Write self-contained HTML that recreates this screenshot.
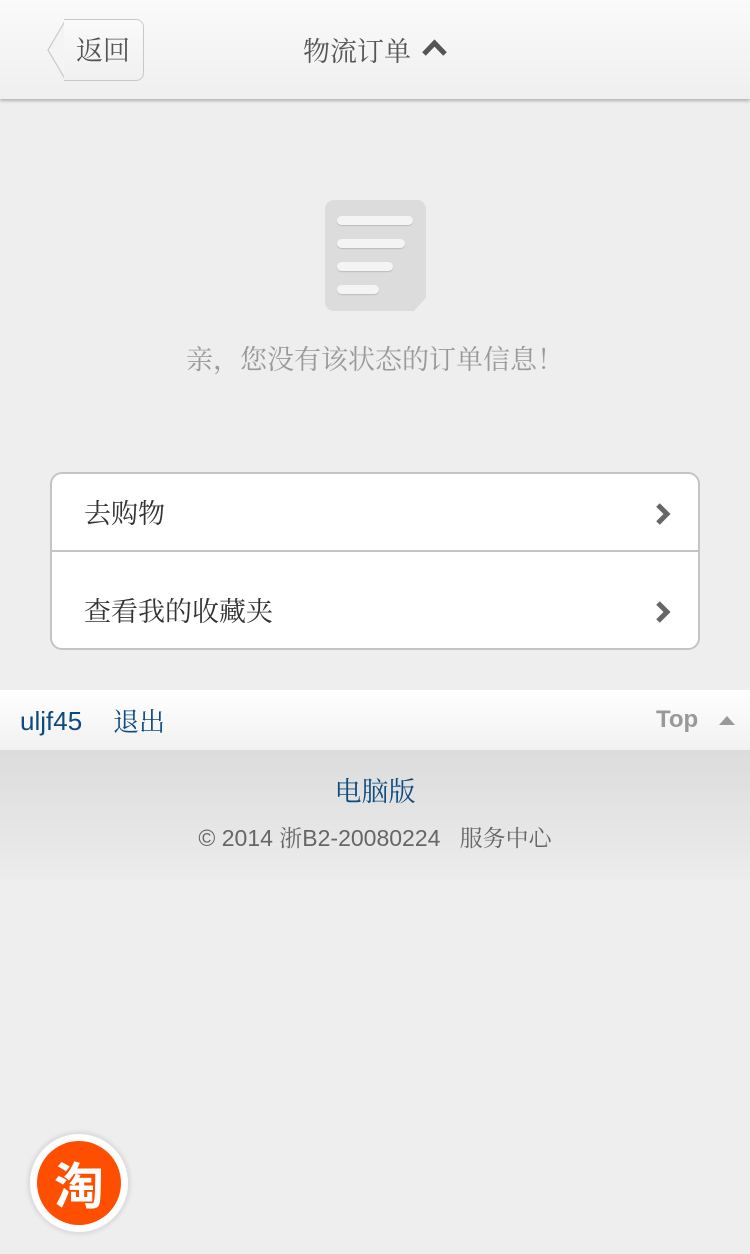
<!DOCTYPE html>
<html><head><meta charset="utf-8"><style>
*{margin:0;padding:0;box-sizing:border-box}
body{width:750px;height:1254px;background:#eeeeee;font-family:"Liberation Sans","Noto Serif CJK SC",serif;position:relative;overflow:hidden}
.hdr{position:absolute;top:0;left:0;width:750px;height:99px;background:linear-gradient(#fafafa,#efefef);box-shadow:0 2px 3px rgba(0,0,0,.25)}
.back{position:absolute;left:64px;top:19px;width:80px;height:62px;border:1px solid #c8c8c8;border-left:none;border-radius:0 8px 8px 0;background:linear-gradient(#fafafa,#f0f0f0);font-size:27px;color:#555;line-height:62px;padding-left:12px}
.title{position:absolute;left:303px;top:34px;font-size:27px;line-height:36px;color:#555}
.icon{position:absolute;left:325px;top:200px;width:101px;height:111px;background:#dcdcdc;border-radius:9px 9px 0 9px;clip-path:polygon(0 0,100% 0,100% 88%,88% 100%,0 100%)}
.icon i{position:absolute;left:12px;height:9px;border-radius:5px;background:#f4f4f4;box-shadow:0 1px 1px rgba(0,0,0,.15)}
.msg{position:absolute;top:340px;width:750px;text-align:center;font-family:"Noto Serif CJK SC",serif;font-size:27px;line-height:36px;color:#999}
.list{position:absolute;left:50px;top:472px;width:650px;height:178px;background:#fff;border:2px solid #c4c4c4;border-radius:12px;overflow:hidden}
.row{position:absolute;left:0;width:646px;font-size:27px;line-height:36px;color:#333;padding-left:32px}
.ch{position:absolute;right:26px}
.bar{position:absolute;top:690px;left:0;width:750px;height:60px;background:linear-gradient(#fff,#f1f1f1)}
.ft{position:absolute;top:750px;left:0;width:750px;height:130px;background:linear-gradient(#dcdcdc,#ececec)}
</style></head><body>
<div class="hdr">
<svg style="position:absolute;left:47px;top:19px" width="20" height="63"><path d="M19 .5 L1 31 L19 61.5" fill="#f4f4f4" stroke="#c8c8c8" stroke-width="1.2"/></svg>
<div class="back">返回</div>
<div class="title">物流订单</div>
<svg style="position:absolute;left:421px;top:39px" width="27" height="18"><path d="M3 15 L13.5 4 L24 15" fill="none" stroke="#555" stroke-width="5"/></svg>
</div>
<div class="icon"><i style="top:16px;width:76px"></i><i style="top:39px;width:68px"></i><i style="top:62px;width:56px"></i><i style="top:85px;width:42px"></i></div>
<div class="msg">亲，您没有该状态的订单信息！</div>
<div class="list">
<div class="row" style="top:22px">去购物<svg class="ch" style="top:6px" width="18" height="24"><path d="M4 3 L13 12 L4 21" fill="none" stroke="#666" stroke-width="5"/></svg></div>
<div style="position:absolute;left:0;top:76px;width:100%;height:2px;background:#c4c4c4"></div>
<div class="row" style="top:120px">查看我的收藏夹<svg class="ch" style="top:6px" width="18" height="24"><path d="M4 3 L13 12 L4 21" fill="none" stroke="#666" stroke-width="5"/></svg></div>
</div>
<div class="bar">
<span style="position:absolute;left:20px;top:14px;font-size:26px;line-height:34px;color:#0d4a7e">uljf45</span>
<span style="position:absolute;left:113px;top:15px;font-size:26px;line-height:34px;color:#0d4a7e">退出</span>
<span style="position:absolute;left:656px;top:14px;font-size:24px;line-height:32px;font-weight:bold;color:#999">Top</span>
<svg style="position:absolute;left:718px;top:24px" width="18" height="12"><path d="M1 11 L9 2 L17 11Z" fill="#999"/></svg>
</div>
<div class="ft">
<div style="position:absolute;top:24px;width:750px;text-align:center;font-size:27px;line-height:36px;color:#0d4a7e">电脑版</div>
<div style="position:absolute;top:73px;width:750px;text-align:center;font-size:23px;line-height:30px;color:#666">© 2014 浙B2-20080224 &nbsp; 服务中心</div>
</div>
<div style="position:absolute;left:30px;top:1134px;width:98px;height:98px;border-radius:50%;background:#fff;box-shadow:0 0 3px 3px #ddd"></div>
<div style="position:absolute;left:37px;top:1141px;width:84px;height:84px;border-radius:50%;background:#fe4e00;color:#fff;font-family:'Noto Sans CJK SC',sans-serif;font-size:50px;font-weight:bold;line-height:84px;text-align:center">淘</div>
</body></html>
